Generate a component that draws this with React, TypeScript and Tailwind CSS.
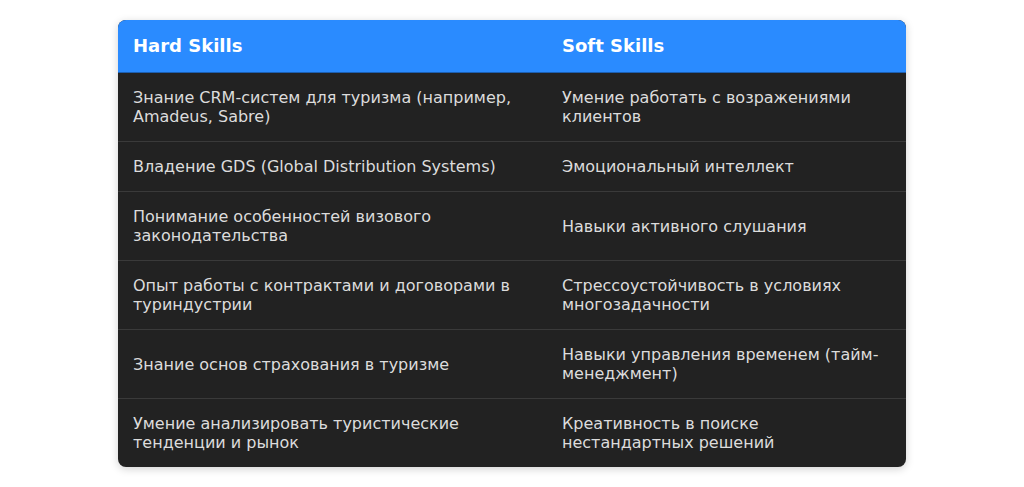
import React from "react";

const rows: [string, string][] = [
  ["Знание CRM-систем для туризма (например, Amadeus, Sabre)", "Умение работать с возражениями клиентов"],
  ["Владение GDS (Global Distribution Systems)", "Эмоциональный интеллект"],
  ["Понимание особенностей визового законодательства", "Навыки активного слушания"],
  ["Опыт работы с контрактами и договорами в туриндустрии", "Стрессоустойчивость в условиях многозадачности"],
  ["Знание основ страхования в туризме", "Навыки управления временем (тайм-менеджмент)"],
  ["Умение анализировать туристические тенденции и рынок", "Креативность в поиске нестандартных решений"],
];

export default function App() {
  return (
    <div
      className="min-h-[487px] w-full bg-white pt-[20px]"
      style={{ fontFamily: '"DejaVu Sans", sans-serif' }}
    >
      <div className="mx-auto w-[788px] overflow-hidden rounded-lg bg-[#222222] shadow-[0_2px_8px_rgba(0,0,0,0.18)]">
        <table className="w-full border-collapse text-left">
          <thead>
            <tr className="border-b border-[#1d5fb0] bg-[#2a8bff] text-white">
              <th className="w-[428px] px-[15px] py-[16px] text-[18px] font-bold leading-[20px]">Hard Skills</th>
              <th className="px-[16px] py-[16px] text-[18px] font-bold leading-[20px]">Soft Skills</th>
            </tr>
          </thead>
          <tbody>
            {rows.map((r, i) => (
              <tr key={i} className={i < rows.length - 1 ? "border-b border-[#3a3a3a]" : ""}>
                <td className="px-[15px] py-[15px] align-middle text-[16px] leading-[19px] text-[#dcdcdc]">
                  {r[0]}
                </td>
                <td className="px-[16px] py-[15px] align-middle text-[16px] leading-[19px] text-[#dcdcdc]">
                  {r[1]}
                </td>
              </tr>
            ))}
          </tbody>
        </table>
      </div>
    </div>
  );
}
